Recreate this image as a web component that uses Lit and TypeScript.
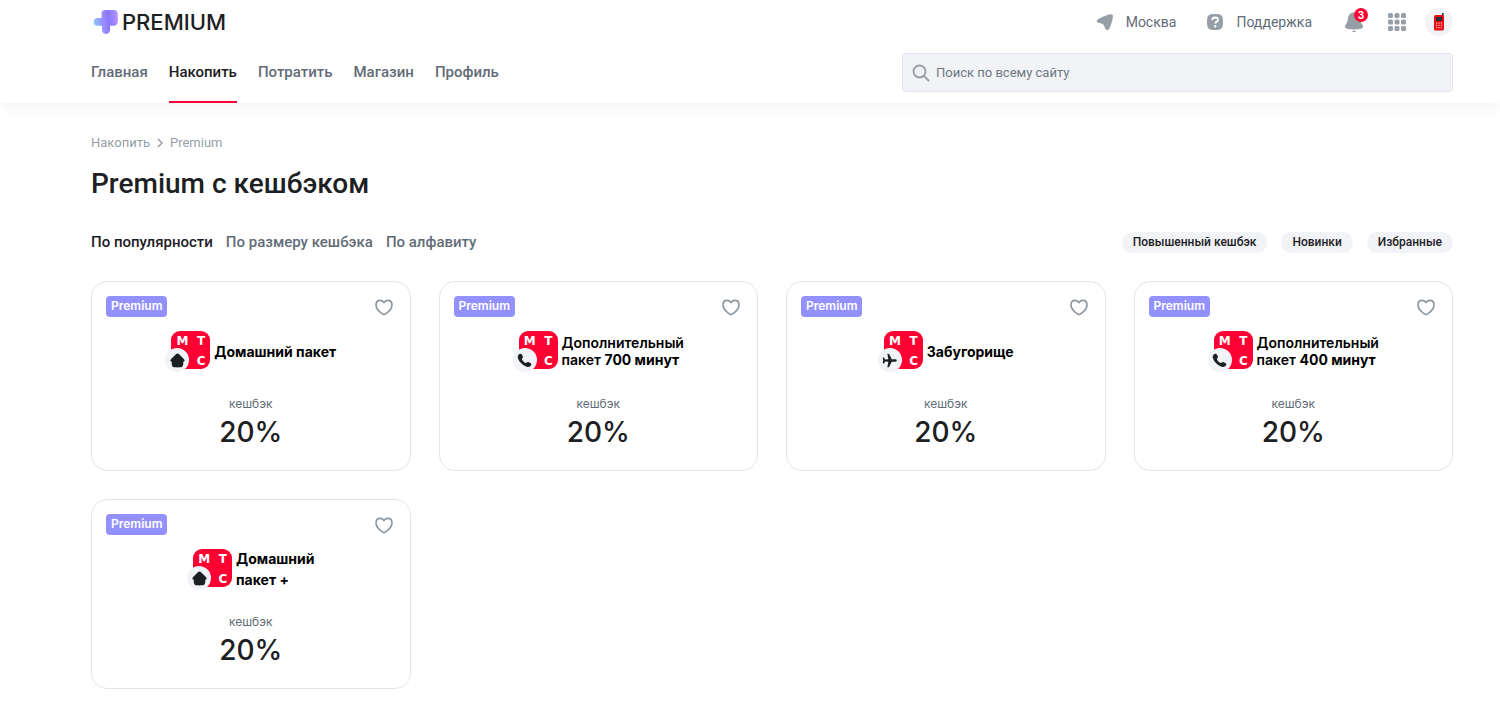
import { LitElement, html, svg, css, nothing } from "lit";
import { customElement, property, state } from "lit/decorators.js";
import { classMap } from "lit/directives/class-map.js";

type Kind = "home" | "phone" | "plane";

interface Offer {
  kind: Kind;
  lines: { text: string; strong?: string }[];
  heavy: boolean;
  loose?: boolean;
}

const OFFERS: Offer[] = [
  { kind: "home", heavy: true, lines: [{ text: "Домашний пакет" }] },
  { kind: "phone", heavy: false, lines: [{ text: "Дополнительный" }, { text: "пакет ", strong: "700 минут" }] },
  { kind: "plane", heavy: true, lines: [{ text: "Забугорище" }] },
  { kind: "phone", heavy: false, lines: [{ text: "Дополнительный" }, { text: "пакет ", strong: "400 минут" }] },
  { kind: "home", heavy: true, loose: true, lines: [{ text: "Домашний" }, { text: "пакет +" }] },
];

const GLYPHS = {
  home: svg`<path d="M7 .5c.6 0 1 .2 1.500.7l4 3.900c.8.800 1.200 1.400 1.200 2 0 .7-.5 1-1.300 1.100 0 1.500 0 2.900-.4 3.700-.5 1.200-1.300 1.400-2.400 1.500-1.700.1-3.500.1-5.200 0-1.100-.1-1.900-.3-2.400-1.500-.4-.8-.4-2.200-.4-3.700C.8 8.100.3 7.800.3 7.100c0-.6.4-1.200 1.200-2l4-3.900C6 .7 6.400.5 7 .5z"/>`,
  phone: svg`<path d="M2.300.9C3.300.3 4 .6 4.500 1.500l.8 1.400c.4.8.3 1.300-.3 1.900-.5.500-.5.900-.2 1.500.6 1.200 1.500 2.100 2.700 2.800.6.4 1 .3 1.500-.2.700-.7 1.200-.7 2-.3l1.500.8c.9.500 1.100 1.200.6 2.100-.9 1.500-2.300 1.900-4.200 1.300C5 11.500 2 8.400.9 4.900.4 3.100.9 1.700 2.300.9z"/>`,
  plane: svg`<path d="M13.800 7c0 .7-.6 1.100-1.500 1.100H9.100L6.900 12.700c-.2.500-.5.700-1 .7h-.9l.9-5.200-3-.3-.9 1.700c-.1.200-.3.300-.5.300H.7L1.100 7 .7 4.100h.8c.2 0 .4.100.5.300l.9 1.700 3-.3L5 .6h.9c.5 0 .8.2 1 .7l2.200 4.600h3.200c.9 0 1.500.4 1.500 1.100z"/>`,
};

@customElement("offer-card")
export class OfferCard extends LitElement {
  static styles = css`
    :host { display: block; }
    .card {
      box-sizing: border-box;
      display: flex;
      flex-direction: column;
      align-items: center;
      height: 100%;
      padding: 14px 14px 20px;
      border: 1px solid #e2e5eb;
      border-radius: 16px;
      background: #fff;
      font-family: Inter, "Noto Sans", sans-serif;
    }
    .top { display: flex; justify-content: space-between; align-self: stretch; }
    .badge {
      height: 21px;
      padding: 0 5px;
      border-radius: 4px;
      background: #9391ff;
      color: #fff;
      font-size: 12px;
      font-weight: 600;
      line-height: 19px;
    }
    .like { display: flex; padding: 1px 0; border: 0; background: none; cursor: pointer; }
    .like svg { fill: none; stroke: #8d969f; stroke-width: 1.6; }
    .like.on svg { fill: #ff0032; stroke: #ff0032; }
    .brand { display: flex; align-items: center; gap: 4px; height: 42px; margin-top: 12px; }
    .mark { position: relative; padding: 0 0 2px 6px; }
    .square {
      box-sizing: border-box;
      display: grid;
      grid-template-columns: 1fr 1fr;
      width: 39px;
      height: 38px;
      padding: 0 0 0 2px;
      border-radius: 9px;
      background: #ff0032;
      color: #fff;
      font-family: "DejaVu Sans", sans-serif;
      font-size: 12px;
      font-weight: 700;
      line-height: 20px;
      text-align: center;
    }
    .square .c { grid-column: 2; }
    .disc {
      position: absolute;
      left: 0;
      bottom: -1px;
      display: flex;
      align-items: center;
      justify-content: center;
      width: 24px;
      height: 24px;
      border-radius: 50%;
      background: #f2f3f7;
    }
    .disc svg { fill: #1d2023; }
    .name { margin: 0; color: #000; font-size: 14px; font-weight: 600; line-height: 17px; }
    .name.heavy { font-weight: 700; }
    .name.loose { line-height: 21px; }
    .name span { display: block; }
    .name b { font-weight: 700; }
    .label { margin: 24px 0 0; color: #626c77; font-size: 12px; line-height: 16px; }
    .value { margin: 2px 0 0; color: #1d2023; font-size: 28px; font-weight: 500; line-height: 36px; }
  `;

  @property({ attribute: false }) offer!: Offer;
  @state() private liked = false;

  render() {
    const { kind, lines, heavy, loose } = this.offer;
    return html`
      <article class="card">
        <div class="top">
          <span class="badge">Premium</span>
          <button
            class=${classMap({ like: true, on: this.liked })}
            aria-label="В избранное"
            aria-pressed=${this.liked}
            @click=${() => (this.liked = !this.liked)}
          >
            <svg width="24" height="20" viewBox="0 0 24 20">
              <path d="M12 17.500c-1 0-2-.7-4.500-2.900C5.200 12.500 4 10.800 4 8c0-2.700 1.700-4.600 4.100-4.600 1.600 0 2.800.6 3.900 2 1.100-1.400 2.300-2 3.900-2C18.300 3.400 20 5.300 20 8c0 2.800-1.200 4.500-3.500 6.600C14 16.800 13 17.500 12 17.500z" />
            </svg>
          </button>
        </div>
        <div class="brand">
          <div class="mark">
            <div class="square"><span>М</span><span>Т</span><span class="c">С</span></div>
            <span class="disc"><svg width="15" height="15" viewBox="0 0 14 14">${GLYPHS[kind]}</svg></span>
          </div>
          <h2 class=${classMap({ name: true, heavy, loose: !!loose })}>
            ${lines.map((l) => html`<span>${l.text}${l.strong ? html`<b>${l.strong}</b>` : nothing}</span>`)}
          </h2>
        </div>
        <p class="label">кешбэк</p>
        <p class="value">20%</p>
      </article>
    `;
  }
}

@customElement("site-header")
export class SiteHeader extends LitElement {
  static styles = css`
    :host {
      display: block;
      background: #fff;
      box-shadow: 0 4px 16px rgba(0, 0, 0, 0.05);
      font-family: Roboto, "Noto Sans", sans-serif;
    }
    a { color: inherit; text-decoration: none; }
    button { display: flex; padding: 0; border: 0; background: none; cursor: pointer; }
    .inner { margin: 0 47px 0 91px; }
    .row { display: flex; align-items: center; justify-content: space-between; }
    .top { height: 43px; }
    .logo {
      display: flex;
      align-items: center;
      gap: 3px;
      padding-left: 2px;
      color: #1d2023;
      font-family: Inter, sans-serif;
      font-size: 22px;
      font-weight: 500;
    }
    .tools { display: flex; align-items: center; color: #626c77; font-size: 14px; }
    .tools svg { fill: #969fa8; }
    .tool { display: flex; align-items: center; gap: 11px; margin-right: 29px; }
    .bell { position: relative; margin: 0 22px 0 1px; }
    .count {
      position: absolute;
      top: -2px;
      right: -2px;
      width: 14px;
      border-radius: 7px;
      background: #ff0032;
      color: #fff;
      font-family: Inter, sans-serif;
      font-size: 10px;
      font-weight: 700;
      line-height: 14px;
      text-align: center;
    }
    .avatar {
      align-items: center;
      justify-content: center;
      width: 28px;
      height: 28px;
      margin-left: 19px;
      border-radius: 50%;
      background: #f2f3f7;
    }
    .bottom { align-items: flex-start; }
    .nav { display: flex; gap: 21px; }
    .nav a {
      padding: 19px 0;
      border-bottom: 2px solid transparent;
      color: #626c77;
      font-size: 15px;
      font-weight: 500;
      line-height: 20px;
    }
    .nav a.current { border-color: #ff0032; color: #1d2023; }
    .search {
      box-sizing: border-box;
      display: flex;
      align-items: center;
      gap: 6px;
      width: 551px;
      height: 39px;
      margin-top: 10px;
      padding: 0 9px;
      border: 1px solid #e2e5eb;
      border-radius: 4px;
      background: #f2f3f7;
    }
    .search svg { flex: none; fill: none; stroke: #969fa8; stroke-width: 1.800; }
    .search input {
      flex: 1;
      min-width: 0;
      padding: 0;
      border: 0;
      outline: 0;
      background: none;
      color: #1d2023;
      font: 13px/20px Roboto, "Noto Sans", sans-serif;
    }
    .search input::placeholder { color: #6f7883; opacity: 1; }
  `;

  render() {
    const links = ["Главная", "Накопить", "Потратить", "Магазин", "Профиль"];
    return html`
      <header class="inner">
        <div class="row top">
          <a class="logo" href="#">
            <svg width="26" height="26" viewBox="0 0 26 26" aria-hidden="true">
              <defs>
                <linearGradient id="g" x1="0" y1=".5" x2="1" y2=".4">
                  <stop offset="0" stop-color="#86c8ff" />
                  <stop offset=".4" stop-color="#9b8cff" />
                  <stop offset=".62" stop-color="#8a78fb" />
                  <stop offset="1" stop-color="#b193ff" />
                </linearGradient>
              </defs>
              <path fill="url(#g)" d="M13 1h7c3.500 0 4.800 1.300 4.800 4.800v6c0 3.500-1.300 5-4.800 5h-3v3.800c0 2.900-1.400 4.400-4 4.400s-4-1.500-4-4.400v-3.800H5c-2.900 0-4.200-1.300-4.200-3.900S2.100 9 5 9h3.500V5.800C8.500 2.300 9.700 1 13 1z" />
            </svg>
            <span>PREMIUM</span>
          </a>
          <div class="tools">
            <a class="tool" href="#">
              <svg width="20" height="20" viewBox="0 0 20 20" aria-hidden="true">
                <path d="M1.700 8.900c.3-1.200 1.900-2.300 5-3.700 3.300-1.500 7-2.800 9.300-3 1.400-.1 2 .7 1.900 2.200-.2 2.700-1.200 6.500-2.500 9.900-.9 2.200-1.700 3.600-2.900 3.800-1.100.1-1.800-.9-2.700-2.600-.8-1.500-1-2.600-1.900-3.300-.8-.6-1.900-.8-3.300-1.200C2.500 10.500 1.500 9.900 1.700 8.900z" />
              </svg>
              Москва
            </a>
            <a class="tool" href="#">
              <svg width="20" height="20" viewBox="0 0 20 20" aria-hidden="true">
                <path d="M10 2c6.500 0 8 1.500 8 8s-1.500 8-8 8-8-1.500-8-8 1.500-8 8-8z" />
                <path d="M7.200 8c.1-1.700 1.200-2.500 2.900-2.500 1.800 0 2.900.8 2.900 2.200 0 1.200-.7 1.700-1.500 2.100-.8.4-1.200.7-1.200 1.700" fill="none" stroke="#fff" stroke-width="1.900" />
                <circle cx="10.200" cy="14.200" r="1.200" fill="#fff" />
              </svg>
              Поддержка
            </a>
            <button class="bell" aria-label="Уведомления">
              <svg width="24" height="24" viewBox="0 0 24 24">
                <path d="M12 2.500c3.800 0 5.600 2.500 6.100 6.300.3 2.500.9 3.900 2 5.600.9 1.400 1.300 2.300.8 3.100-.8 1.200-4 1.900-8.900 1.900s-8.100-.7-8.900-1.900c-.5-.8-.1-1.700.8-3.100 1.100-1.700 1.700-3.100 2-5.600C6.400 5 8.200 2.500 12 2.500z" />
                <path d="M9.800 20.700h4.400c-.3.900-1.200 1.300-2.200 1.300s-1.900-.4-2.200-1.300z" />
              </svg>
              <span class="count">3</span>
            </button>
            <button aria-label="Сервисы">
              <svg width="18" height="18" viewBox="0 0 18 18">
                ${[0, 6.5, 13].map((y) => [0, 6.5, 13].map((x) => svg`<rect x=${x} y=${y} width="5" height="5" rx="1.500" />`))}
              </svg>
            </button>
            <button class="avatar" aria-label="Личный кабинет">
              <svg width="12" height="18" viewBox="0 0 12 18">
                <rect x="9" y="0" width="1.600" height="5" fill="#33343a" />
                <rect x="1" y="2" width="10" height="15.500" rx="1.500" fill="#eb0a14" />
                <rect x="3" y="4" width="6" height="4" fill="#26303a" />
                ${[9.5, 11.8, 14.1].map((y) => [3, 5.4, 7.8].map((x) => svg`<rect x=${x} y=${y} width="1.300" height="1.200" fill="#ffb3b3" />`))}
              </svg>
            </button>
          </div>
        </div>
        <div class="row bottom">
          <nav class="nav">
            ${links.map((t, i) => html`<a href="#" class=${classMap({ current: i === 1 })}>${t}</a>`)}
          </nav>
          <label class="search">
            <svg width="18" height="18" viewBox="0 0 18 18" aria-hidden="true">
              <circle cx="7.500" cy="7.500" r="6" />
              <path d="M12 12l4.500 4.500" stroke-linecap="round" />
            </svg>
            <input type="search" placeholder="Поиск по всему сайту" aria-label="Поиск по всему сайту" />
          </label>
        </div>
      </header>
    `;
  }
}

@customElement("app-root")
export class AppRoot extends LitElement {
  static styles = css`
    :host {
      display: block;
      min-height: 100vh;
      background: #fff;
      color: #1d2023;
      font-family: Roboto, "Noto Sans", sans-serif;
    }
    main { margin: 0 47px 0 91px; padding: 30px 0 28px; }
    .crumbs { display: flex; align-items: center; gap: 7px; color: #969fa8; font-size: 13px; line-height: 20px; }
    .crumbs a { color: inherit; text-decoration: none; }
    .crumbs svg { fill: none; stroke: #969fa8; stroke-width: 1.500; }
    h1 { margin: 13px 0 0; font-size: 28px; font-weight: 500; line-height: 36px; }
    .bar { display: flex; justify-content: space-between; align-items: flex-start; margin-top: 30px; }
    .sorts { display: flex; gap: 13px; }
    .filters { display: flex; gap: 14px; }
    .bar button { border: 0; cursor: pointer; }
    .sort { padding: 0; background: none; color: #626c77; font: 500 15px/20px Roboto, "Noto Sans", sans-serif; }
    .sort.on { color: #1d2023; }
    .chip {
      padding: 0 11px 1px;
      height: 21px;
      border-radius: 11px;
      background: #f2f3f7;
      color: #1d2023;
      font: 500 12px/20px Roboto, "Noto Sans", sans-serif;
    }
    .chip.on { background: #dfe1e8; }
    .grid { display: grid; grid-template-columns: repeat(4, minmax(0, 1fr)); gap: 28px; margin-top: 28px; }
  `;

  @state() private sort = 0;
  @state() private filter = -1;

  render() {
    const sorts = ["По популярности", "По размеру кешбэка", "По алфавиту"];
    const filters = ["Повышенный кешбэк", "Новинки", "Избранные"];
    return html`
      <site-header></site-header>
      <main>
        <nav class="crumbs" aria-label="Навигация">
          <a href="#">Накопить</a>
          <svg width="6" height="10" viewBox="0 0 6 10" aria-hidden="true"><path d="M1 1l4 4-4 4" /></svg>
          <span>Premium</span>
        </nav>
        <h1>Premium с кешбэком</h1>
        <div class="bar">
          <div class="sorts">
            ${sorts.map((t, i) => html`<button class=${classMap({ sort: true, on: i === this.sort })} @click=${() => (this.sort = i)}>${t}</button>`)}
          </div>
          <div class="filters">
            ${filters.map((t, i) => html`<button class=${classMap({ chip: true, on: i === this.filter })} @click=${() => (this.filter = this.filter === i ? -1 : i)}>${t}</button>`)}
          </div>
        </div>
        <section class="grid">${OFFERS.map((o) => html`<offer-card .offer=${o}></offer-card>`)}</section>
      </main>
    `;
  }
}
